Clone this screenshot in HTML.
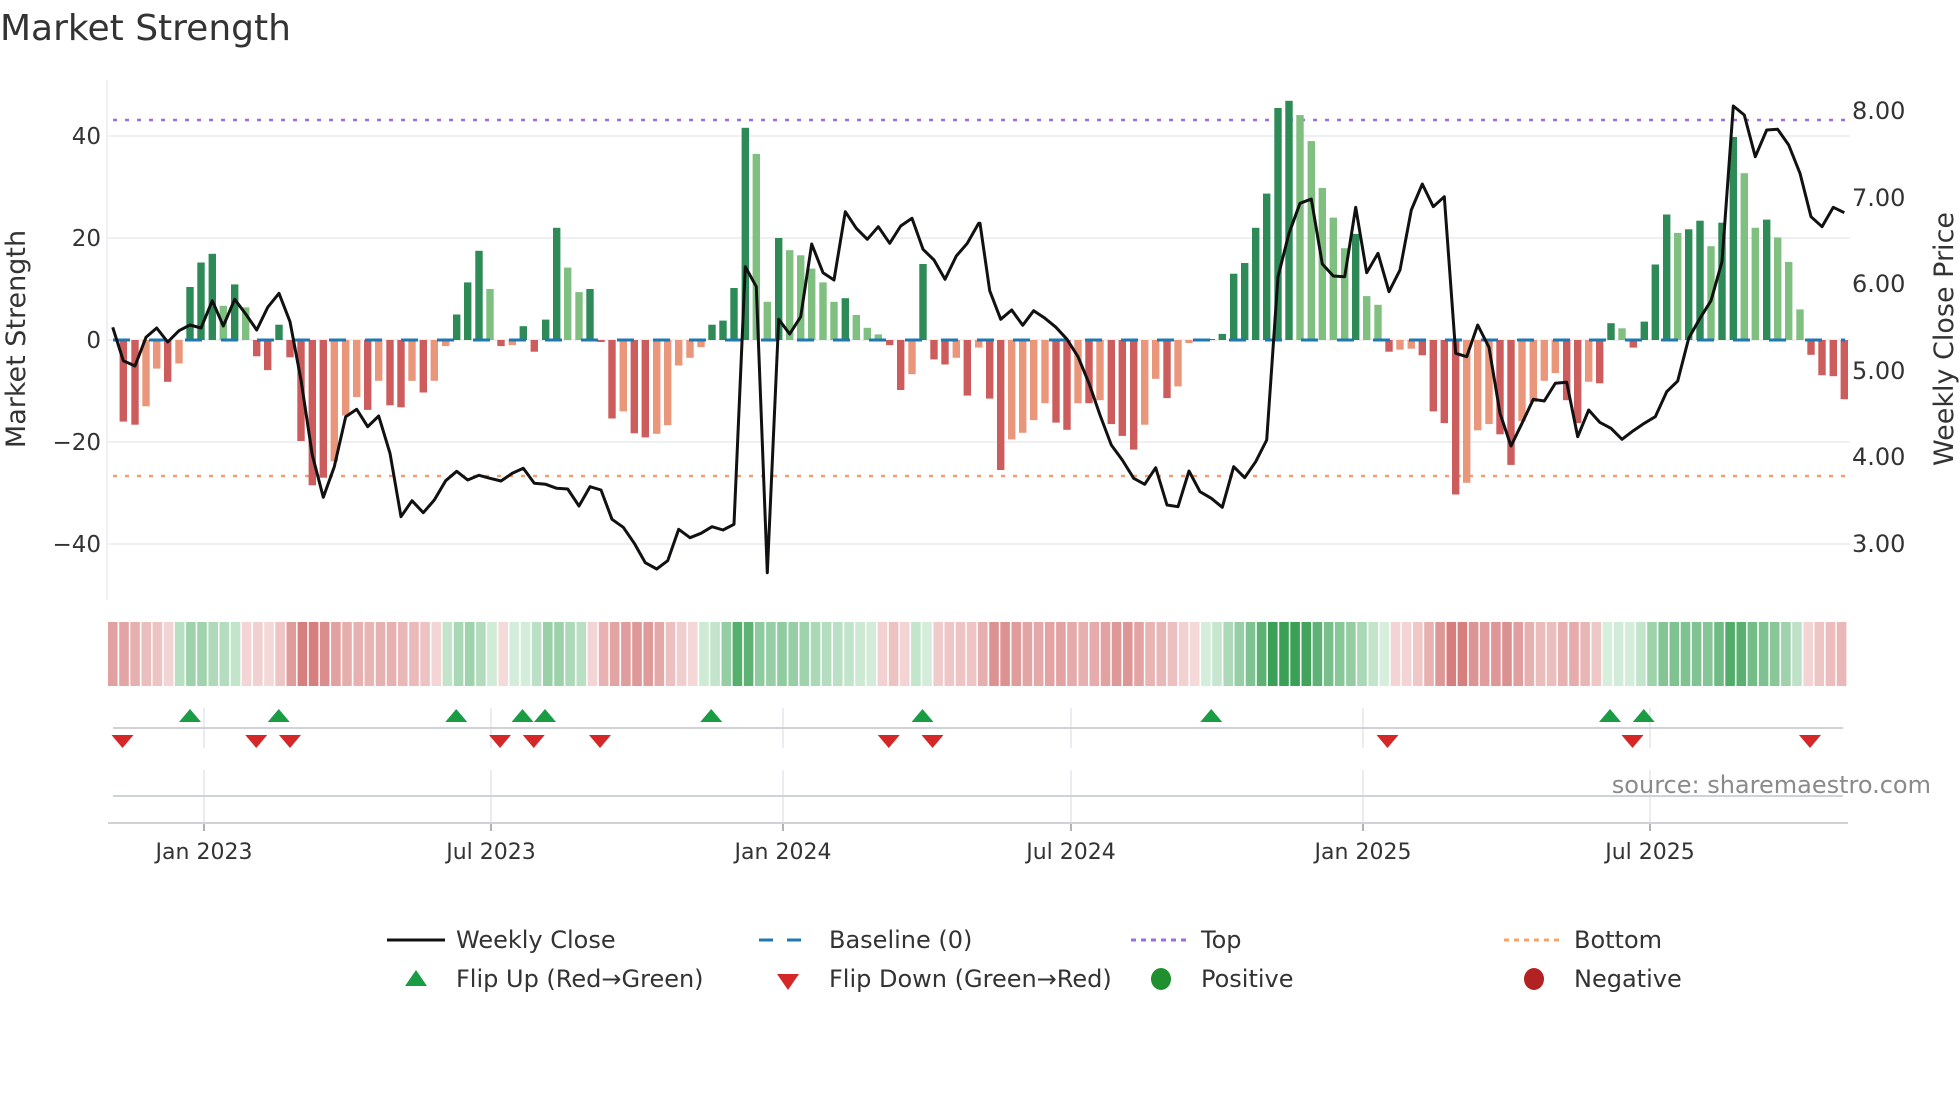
<!DOCTYPE html>
<html><head><meta charset="utf-8"><style>
html,body{margin:0;padding:0;background:#fff;}
svg{display:block;font-family:"DejaVu Sans","Liberation Sans",sans-serif;}
</style></head><body>
<svg id="s" width="1960" height="1102" xmlns="http://www.w3.org/2000/svg">
<rect width="1960" height="1102" fill="#fff"/>
<text x="0" y="40" font-size="36" fill="#333">Market Strength</text>
<g id="g"></g>
<text x="1931" y="793" font-size="24" fill="#8a8a8a" text-anchor="end">source: sharemaestro.com</text>
<g font-size="23" fill="#333" text-anchor="end">
<text x="101" y="144">40</text><text x="101" y="246">20</text><text x="101" y="348">0</text>
<text x="101" y="450">−20</text><text x="101" y="552">−40</text>
</g>
<g font-size="24" fill="#333">
<text x="1852" y="119">8.00</text><text x="1852" y="206">7.00</text><text x="1852" y="292">6.00</text>
<text x="1852" y="379">5.00</text><text x="1852" y="465">4.00</text><text x="1852" y="552">3.00</text>
</g>
<text transform="translate(25,339) rotate(-90)" font-size="27" fill="#333" text-anchor="middle">Market Strength</text>
<text transform="translate(1953,339) rotate(-90)" font-size="27" fill="#333" text-anchor="middle">Weekly Close Price</text>
<g font-size="22" fill="#333" text-anchor="middle">
<text x="204" y="859">Jan 2023</text><text x="491" y="859">Jul 2023</text><text x="783" y="859">Jan 2024</text>
<text x="1071" y="859">Jul 2024</text><text x="1363" y="859">Jan 2025</text><text x="1650" y="859">Jul 2025</text>
</g>
<g font-size="24" fill="#333">
<line x1="387" y1="940" x2="445" y2="940" stroke="#111" stroke-width="3"/>
<text x="456" y="948">Weekly Close</text>
<line x1="759" y1="940" x2="815" y2="940" stroke="#1f77b4" stroke-width="3" stroke-dasharray="14 14"/>
<text x="829" y="948">Baseline (0)</text>
<line x1="1131" y1="940" x2="1187" y2="940" stroke="#9b6ddf" stroke-width="3" stroke-dasharray="5 5"/>
<text x="1201" y="948">Top</text>
<line x1="1504" y1="940" x2="1560" y2="940" stroke="#f4a46a" stroke-width="3" stroke-dasharray="5 5"/>
<text x="1574" y="948">Bottom</text>
<polygon points="416,970 405,986 427,986" fill="#1a9c45"/>
<text x="456" y="987">Flip Up (Red→Green)</text>
<polygon points="777,974 799,974 788,990" fill="#d62728"/>
<text x="829" y="987">Flip Down (Green→Red)</text>
<ellipse cx="1161" cy="979" rx="10" ry="11" fill="#1f8f2f"/>
<text x="1201" y="987">Positive</text>
<ellipse cx="1534" cy="979" rx="10" ry="11" fill="#b22222"/>
<text x="1574" y="987">Negative</text>
</g>
</svg>
<script>
var segs=[[100,"70 -16 R;105 -16.6 R;138 -13 S;170 -5.6 S;203 -8.2 R;237 -4.6 S;270 10.4 D;303 15.2 D;337 16.9 D;370 6.7 L;404 10.9 D;437 6.4 L;470 -3.2 R;503 -5.9 R;537 3 D;570 -3.4 R;603 -19.8 R;637 -28.5 R;670 -27 R;703 -23.8 S;737 -14.8 S;770 -11.2 S;803 -13.7 R;836 -8 S;870 -12.8 R;903 -13.2 R;936 -8 S;970 -10.3 R;1003 -8 S;1037 -1.2 S;1070 5 D;1103 11.3 D;1137 17.5 D;1170 10 L;1203 -1.2 R;1237 -1 S;1270 2.7 D;1303 -2.3 R"],
[540,"17 4 D;50 22 D;83 14.2 L;117 9.4 L;150 10 D;183 -0.4 R;216 -15.4 R;250 -14 S;283 -18.3 R;316 -19.1 R;350 -18.4 S;383 -16.7 S;416 -5 S;450 -3.5 S;483 -1.4 S;516 3 D;549 3.8 D;582 10.2 D;616 41.6 D;649 36.5 L;682 7.5 L;716 20 D;749 17.6 L;782 16.6 L;815 14 L;849 11.3 L;882 7.5 L;916 8.2 D;949 4.9 L;982 2.4 L;1015 1.1 L;1049 -1 R;1082 -9.8 R;1116 -6.7 S;1149 14.9 D;1182 -3.8 R;1215 -4.8 R;1249 -3.5 S;1282 -10.9 R;1316 -1.5 S"],
[980,"29 -11.5 R;62 -25.5 R;95 -19.5 S;128 -18.2 S;161 -15.7 S;195 -12.4 S;228 -16.2 R;261 -17.6 R;294 -12.4 S;327 -12.4 R;360 -11.8 S;394 -16.5 R;427 -18.8 R;461 -21.5 R;494 -16.6 S;527 -7.6 S;561 -11.4 R;594 -9.1 S;627 -0.6 S;660 -0.2 D;694 0.2 D;727 1.2 D;761 13 D;794 15.1 D;827 22 D;860 28.7 D;894 45.5 D;927 46.9 D;960 44.1 L;994 39 L;1027 29.8 L;1060 24 L;1094 18 L;1127 20.8 D;1160 8.6 L;1194 6.9 L;1227 -2.3 R;1260 -1.9 S;1294 -1.7 S"],
[1420,"7 -3 R;40 -14 R;73 -16.3 R;107 -30.3 R;140 -28 S;173 -17.7 S;207 -16.5 S;240 -18.5 R;273 -24.5 R;306 -15.9 S;340 -12.2 S;373 -8 S;406 -6.5 S;440 -11.8 R;473 -16.3 R;506 -8.2 S;539 -8.5 R;573 3.3 D;606 2.3 L;640 -1.5 R;673 3.6 D;706 14.8 D;740 24.6 D;773 21 L;806 21.7 D;840 23.4 D;873 18.4 L;906 23 D;940 39.8 D;973 32.7 L;1006 22 L;1040 23.6 D;1073 20.1 L;1106 15.3 L;1140 6 L;1173 -2.9 R;1206 -6.9 R;1240 -7.1 R;1273 -11.6 R"]];
var lines=[[100,"38,712 70,812 105,828 138,742 170,714 203,756 237,722 270,705 303,714 337,632 370,708 404,628 437,672 470,720 503,652 537,610 570,695 603,870 637,1095 670,1222 703,1130 737,980 770,958 803,1010 836,978 870,1090 903,1280 936,1232 970,1268 1003,1230 1037,1172 1070,1144 1103,1170 1137,1156 1170,1165 1203,1173 1237,1150 1270,1135 1303,1180"],
[540,"17,1183 50,1195 83,1197 117,1248 150,1190 183,1200 216,1288 250,1312 283,1360 316,1418 350,1437 383,1412 416,1318 450,1343 483,1330 516,1310 549,1320 582,1303 616,530 649,590 682,1448 716,688 749,732 782,680 815,462 849,548 882,570 916,365 949,415 982,448 1015,410 1049,460 1082,408 1116,385 1149,478 1182,510 1215,568 1249,498 1282,460 1316,400"],
[980,"0,400 29,602 62,688 95,660 128,706 161,662 195,685 228,712 261,748 294,800 327,880 360,975 394,1065 427,1110 461,1165 494,1183 527,1133 561,1245 594,1250 627,1143 660,1205 694,1225 727,1252 761,1130 794,1163 827,1115 860,1050 894,560 927,430 960,340 994,327 1027,522 1060,558 1094,560 1127,352 1160,548 1194,490 1227,605 1260,540 1294,360"],
[1420,"7,282 40,350 73,320 107,790 140,800 173,705 207,772 240,970 273,1068 306,1000 340,928 373,933 406,880 440,877 473,1040 506,960 539,997 573,1015 606,1048 640,1022 673,1000 706,980 740,905 773,873 806,745 840,685 873,632 906,515 940,48 973,75 1006,200 1040,120 1073,118 1106,165 1140,250 1173,380 1206,410 1240,352 1273,368"]];
var col={D:"#2e8b57",L:"#7fbf7f",R:"#cd5c5c",S:"#e9967a"};
var bars=[];segs.forEach(function(s){s[1].split(";").forEach(function(t){var p=t.split(" ");bars.push([s[0]+(+p[0])/3,+p[1],p[2]]);});});
var h="";
[40,20,0,-20,-40].forEach(function(v){var y=340-v*5.1;h+='<line x1="108" x2="1850" y1="'+y+'" y2="'+y+'" stroke="#eef0f3" stroke-width="2"/>';});
h+='<line x1="107" x2="107" y1="80" y2="600" stroke="#eef0f3" stroke-width="2"/>';
h+='<line x1="113" x2="1845" y1="120" y2="120" stroke="#9b6ddf" stroke-width="2.5" stroke-dasharray="4 8"/>';
h+='<line x1="113" x2="1845" y1="476" y2="476" stroke="#f0a070" stroke-width="2.5" stroke-dasharray="4 8"/>';
bars.forEach(function(b){var y=340-b[1]*5.1;var top=Math.min(y,340),hh=Math.max(Math.abs(b[1]*5.1),0.8);h+='<rect x="'+(b[0]-3.7).toFixed(1)+'" y="'+top.toFixed(1)+'" width="7.4" height="'+hh.toFixed(1)+'" fill="'+col[b[2]]+'"/>';});
h+='<line x1="113" x2="1845" y1="340" y2="340" stroke="#1f77b4" stroke-width="3" stroke-dasharray="17 19"/>';
var pts=[];lines.forEach(function(s){s[1].split(" ").forEach(function(q){var p=q.split(",");pts.push(((s[0]+(+p[0])/3)).toFixed(1)+","+(90+(+p[1])/3).toFixed(1));});});
h+='<polyline points="'+pts.join(" ")+'" fill="none" stroke="#111" stroke-width="3" stroke-linejoin="round"/>';
function mix(a,b,t){return "rgb("+[0,1,2].map(function(i){return Math.round(a[i]+(b[i]-a[i])*t);}).join(",")+")";}
var x0=108,x1=1848,n=bars.length,cw=(x1-x0)/n;
for(var i=0;i<n;i++){var v=0,m=0;for(var k=-1;k<=1;k++){if(bars[i+k]){v+=bars[i+k][1]*(k==0?2:1);m+=(k==0?2:1);}}v/=m;
var c=v>=0?mix([214,238,220],[58,160,85],Math.min(v/40,1)):mix([245,218,218],[212,120,120],Math.min(-v/28,1));
h+='<rect x="'+(x0+i*cw).toFixed(1)+'" y="622" width="'+(cw-1.6).toFixed(1)+'" height="64" fill="'+c+'"/>';}
[204,491,783,1071,1363,1650].forEach(function(x){h+='<line x1="'+x+'" x2="'+x+'" y1="708" y2="748" stroke="#e4e6ea" stroke-width="1.5"/><line x1="'+x+'" x2="'+x+'" y1="770" y2="823" stroke="#e4e6ea" stroke-width="1.5"/><line x1="'+x+'" x2="'+x+'" y1="823" y2="831" stroke="#999" stroke-width="1.5"/>';});
h+='<line x1="113" x2="1843" y1="728" y2="728" stroke="#cfd2d8" stroke-width="2"/>';
h+='<line x1="113" x2="1843" y1="796" y2="796" stroke="#cfd2d8" stroke-width="2"/>';
h+='<line x1="108" x2="1848" y1="823" y2="823" stroke="#cfd2d8" stroke-width="2"/>';
[152,223,365,418,436,569,738,969,1288,1315].forEach(function(x){x*=1.25;h+='<polygon points="'+x+',709 '+(x-11)+',722 '+(x+11)+',722" fill="#1a9c45"/>';});
[98,205,232,400,427,480,711,746,1110,1306,1448].forEach(function(x){x*=1.25;h+='<polygon points="'+(x-11)+',735 '+(x+11)+',735 '+x+',748" fill="#d62728"/>';});
document.getElementById("g").innerHTML=h;
</script>
</body></html>
